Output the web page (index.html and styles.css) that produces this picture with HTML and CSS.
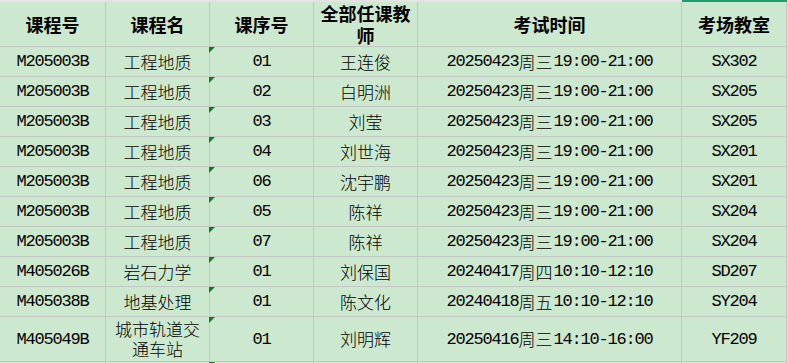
FILE: index.html
```html
<!DOCTYPE html>
<html lang="zh-CN">
<head>
<meta charset="utf-8">
<title>考试安排</title>
<link rel="stylesheet" href="styles.css">
</head>
<body>
<div class="sheet">
  <div class="strip">
    <div></div><div></div><div></div><div></div><div></div><div class="sel"></div>
  </div>
  <div class="row head">
    <div class="cell">课程号</div>
    <div class="cell">课程名</div>
    <div class="cell">课序号</div>
    <div class="cell">全部任课教师</div>
    <div class="cell">考试时间</div>
    <div class="cell">考场教室</div>
  </div>
  <div class="row">
    <div class="cell en">M205003B</div><div class="cell zh">工程地质</div><div class="cell en mark">01</div><div class="cell zh">王连俊</div><div class="cell en">20250423<span class="zh">周三</span>19:00-21:00</div><div class="cell en">SX302</div>
  </div>
  <div class="row">
    <div class="cell en">M205003B</div><div class="cell zh">工程地质</div><div class="cell en mark">02</div><div class="cell zh">白明洲</div><div class="cell en">20250423<span class="zh">周三</span>19:00-21:00</div><div class="cell en">SX205</div>
  </div>
  <div class="row">
    <div class="cell en">M205003B</div><div class="cell zh">工程地质</div><div class="cell en mark">03</div><div class="cell zh">刘莹</div><div class="cell en">20250423<span class="zh">周三</span>19:00-21:00</div><div class="cell en">SX205</div>
  </div>
  <div class="row">
    <div class="cell en">M205003B</div><div class="cell zh">工程地质</div><div class="cell en mark">04</div><div class="cell zh">刘世海</div><div class="cell en">20250423<span class="zh">周三</span>19:00-21:00</div><div class="cell en">SX201</div>
  </div>
  <div class="row">
    <div class="cell en">M205003B</div><div class="cell zh">工程地质</div><div class="cell en mark">06</div><div class="cell zh">沈宇鹏</div><div class="cell en">20250423<span class="zh">周三</span>19:00-21:00</div><div class="cell en">SX201</div>
  </div>
  <div class="row">
    <div class="cell en">M205003B</div><div class="cell zh">工程地质</div><div class="cell en mark">05</div><div class="cell zh">陈祥</div><div class="cell en">20250423<span class="zh">周三</span>19:00-21:00</div><div class="cell en">SX204</div>
  </div>
  <div class="row">
    <div class="cell en">M205003B</div><div class="cell zh">工程地质</div><div class="cell en mark">07</div><div class="cell zh">陈祥</div><div class="cell en">20250423<span class="zh">周三</span>19:00-21:00</div><div class="cell en">SX204</div>
  </div>
  <div class="row">
    <div class="cell en">M405026B</div><div class="cell zh">岩石力学</div><div class="cell en mark">01</div><div class="cell zh">刘保国</div><div class="cell en">20240417<span class="zh">周四</span>10:10-12:10</div><div class="cell en">SD207</div>
  </div>
  <div class="row">
    <div class="cell en">M405038B</div><div class="cell zh">地基处理</div><div class="cell en mark">01</div><div class="cell zh">陈文化</div><div class="cell en">20240418<span class="zh">周五</span>10:10-12:10</div><div class="cell en">SY204</div>
  </div>
  <div class="row tall">
    <div class="cell en">M405049B</div><div class="cell zh">城市轨道交通车站</div><div class="cell en mark">01</div><div class="cell zh">刘明辉</div><div class="cell en">20250416<span class="zh">周三</span>14:10-16:00</div><div class="cell en">YF209</div>
  </div>
  <div class="row tail">
    <div class="cell"></div><div class="cell"></div><div class="cell mark"></div><div class="cell"></div><div class="cell"></div><div class="cell"></div>
  </div>
</div>
</body>
</html>
```

FILE: styles.css
```css
html, body {
  margin: 0;
  padding: 0;
  background: #cce8cf;
}

.sheet {
  width: 788px;
  height: 363px;
  overflow: hidden;
  color: #000;
}

.strip,
.row {
  display: grid;
  grid-template-columns: 106px 104px 104px 104px 264px 105px;
}

.strip {
  height: 2px;
  background: #e4e4e4;
}

.strip .sel {
  background: #1f9b6d;
}

.row {
  height: 30px;
}

.row.head {
  height: 45px;
}

.row.tall {
  height: 45px;
}

.row.tail {
  height: 10px;
}

.cell {
  box-sizing: border-box;
  display: flex;
  align-items: center;
  justify-content: center;
  text-align: center;
  border-right: 1px solid #c4c8c4;
  border-bottom: 1px solid #c4c8c4;
  padding: 0 6px;
  white-space: normal;
}

.head .cell {
  font-family: "Noto Sans CJK SC", sans-serif;
  font-weight: 700;
  font-size: 18px;
  line-height: 22px;
  padding: 0 4px;
}

.en {
  font-family: "Liberation Mono", "Noto Sans CJK SC", monospace;
  font-size: 17px;
  letter-spacing: -1.2px;
  white-space: nowrap;
}

.zh {
  font-family: "Noto Sans CJK SC", sans-serif;
  font-size: 17px;
  font-weight: 300;
  line-height: 20px;
  letter-spacing: 0;
}

.en .zh {
  margin-right: 1px;
}

.mark {
  position: relative;
}

.mark::before {
  content: "";
  position: absolute;
  left: -1px;
  top: 0;
  width: 0;
  height: 0;
  border-top: 6px solid #0d7f1f;
  border-right: 6px solid transparent;
}
```
